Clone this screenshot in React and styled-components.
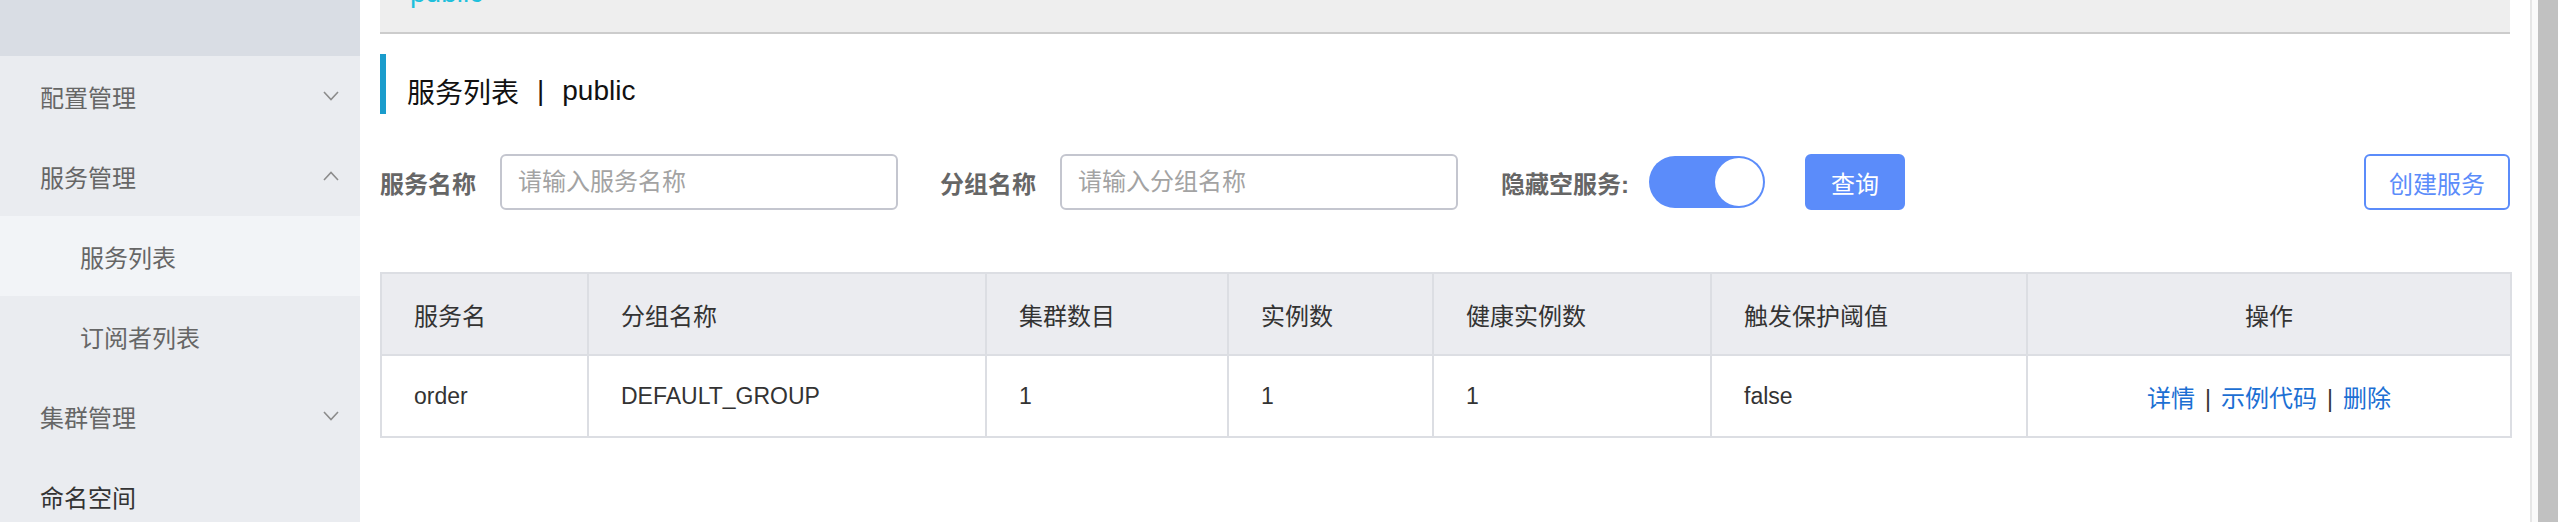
import React from "react";
import styled, { createGlobalStyle } from "styled-components";

const GlobalStyle = createGlobalStyle`
  html, body { margin: 0; padding: 0; background: #fff; }
  body { font-family: "Liberation Sans", "Noto Sans CJK SC", sans-serif; overflow: hidden; }
  * { box-sizing: border-box; }
`;

const FONT = `"Liberation Sans", "Noto Sans CJK SC", sans-serif`;

const Page = styled.div`
  display: flex;
  width: 2558px;
  height: 522px;
  overflow: hidden;
  font-family: ${FONT};
`;

const Sidebar = styled.aside`
  width: 360px;
  flex: 0 0 360px;
  background: #eaecf0;
  display: flex;
  flex-direction: column;
`;

const SideTop = styled.div`
  height: 56px;
  flex: 0 0 56px;
  background: #d9dde4;
`;

const MenuItem = styled.div`
  height: 80px;
  flex: 0 0 80px;
  display: flex;
  align-items: center;
  justify-content: space-between;
  padding: 0 20px 0 ${(p) => (p.$sub ? 80 : 40)}px;
  font-size: 24px;
  color: ${(p) => (p.$dark ? "#333" : "#666")};
  background: ${(p) => (p.$active ? "#f2f4f7" : "transparent")};
`;

const Chevron = ({ up }) => (
  <svg width="16" height="10" viewBox="0 0 16 10" style={{ marginRight: 1 }}>
    <path
      d={up ? "M1 9 L8 1.5 L15 9" : "M1 1 L8 8.5 L15 1"}
      fill="none"
      stroke="#8c8c8c"
      strokeWidth="1.6"
    />
  </svg>
);

const Main = styled.main`
  flex: 1;
  min-width: 0;
  padding: 0 20px;
  display: flex;
  flex-direction: column;
`;

const TopBar = styled.div`
  height: 34px;
  flex: 0 0 34px;
  background: #eeeeee;
  border-bottom: 2px solid #cccccc;
  overflow: hidden;
  padding-left: 30px;
`;

const Crumb = styled.div`
  margin-top: -21px;
  font-size: 28px;
  line-height: 28px;
  color: #1ec0dc;
`;

const TitleBar = styled.div`
  margin-top: 20px;
  height: 60px;
  border-left: 6px solid #1a9ccc;
  padding: 14px 0 0 21px;
  display: flex;
  align-items: center;
  font-size: 28px;
  color: #111;
`;

const Sep = styled.span`
  margin: 0 18px;
`;

const FormRow = styled.div`
  margin-top: 40px;
  height: 56px;
  display: flex;
  align-items: center;
`;

const FormItem = styled.div`
  display: flex;
  align-items: center;
  margin-right: ${(p) => p.$mr ?? 42}px;
`;

const Label = styled.label`
  font-size: 24px;
  font-weight: 700;
  color: #666;
  margin-right: ${(p) => p.$mr ?? 24}px;
  white-space: nowrap;
`;

const Input = styled.input`
  width: 398px;
  height: 56px;
  border: 2px solid #c4c6cf;
  border-radius: 6px;
  padding: 0 16px;
  font-size: 24px;
  font-family: ${FONT};
  color: #333;
  outline: none;
  &::placeholder { color: #a3a3a3; }
`;

const Switch = styled.div`
  width: 116px;
  height: 52px;
  border-radius: 26px;
  background: #5b8cfa;
  display: flex;
  align-items: center;
  justify-content: ${(p) => (p.$on ? "flex-end" : "flex-start")};
  padding: 2px;
`;

const Knob = styled.div`
  width: 48px;
  height: 48px;
  border-radius: 50%;
  background: #fff;
`;

const Button = styled.button`
  height: 56px;
  width: ${(p) => p.$w}px;
  border-radius: 6px;
  font-size: 24px;
  font-family: ${FONT};
  cursor: pointer;
  border: 2px solid #5b8cfa;
  background: ${(p) => (p.$primary ? "#5b8cfa" : "#fff")};
  color: ${(p) => (p.$primary ? "#fff" : "#5b8cfa")};
  margin-left: ${(p) => (p.$push ? "auto" : "0")};
`;

const Table = styled.table`
  margin-top: 62px;
  width: 2130px;
  border-collapse: collapse;
  table-layout: fixed;
  font-size: 24px;
  color: #333;
  border: 2px solid #dcdee3;
`;

const Th = styled.th`
  background: #ebecf0;
  font-weight: 400;
  height: 82px;
  padding: 0 32px;
  text-align: ${(p) => (p.$center ? "center" : "left")};
  border: 2px solid #dcdee3;
`;

const Td = styled.td`
  height: 82px;
  padding: 0 32px;
  font-size: 23px;
  text-align: ${(p) => (p.$center ? "center" : "left")};
  border: 2px solid #dcdee3;
`;

const Link = styled.a`
  color: #1c6fd3;
  font-size: 24px;
  text-decoration: none;
  cursor: pointer;
`;

const Pipe = styled.span`
  color: #333;
  margin: 0 10px;
`;

const Gutter = styled.div`
  width: 28px;
  flex: 0 0 28px;
  border-left: 2px solid #e6e6e6;
  background: #fafafa;
  padding-left: 6px;
  display: flex;
`;

const Thumb = styled.div`
  flex: 1;
  background: #c1c1c1;
`;

const columns = [
  { title: "服务名", w: 207 },
  { title: "分组名称", w: 398 },
  { title: "集群数目", w: 242 },
  { title: "实例数", w: 205 },
  { title: "健康实例数", w: 278 },
  { title: "触发保护阈值", w: 316 },
  { title: "操作", w: 484, center: true },
];

const rows = [
  { name: "order", group: "DEFAULT_GROUP", clusters: 1, instances: 1, healthy: 1, threshold: "false" },
];

export default function App() {
  return (
    <>
      <GlobalStyle />
      <Page>
        <Sidebar>
          <SideTop />
          <MenuItem>配置管理<Chevron /></MenuItem>
          <MenuItem>服务管理<Chevron up /></MenuItem>
          <MenuItem $sub $active>服务列表</MenuItem>
          <MenuItem $sub>订阅者列表</MenuItem>
          <MenuItem>集群管理<Chevron /></MenuItem>
          <MenuItem $dark>命名空间</MenuItem>
        </Sidebar>
        <Main>
          <TopBar>
            <Crumb>public</Crumb>
          </TopBar>
          <TitleBar>
            服务列表<Sep>|</Sep>public
          </TitleBar>
          <FormRow>
            <FormItem>
              <Label>服务名称</Label>
              <Input placeholder="请输入服务名称" />
            </FormItem>
            <FormItem $mr={43}>
              <Label>分组名称</Label>
              <Input placeholder="请输入分组名称" />
            </FormItem>
            <FormItem $mr={40}>
              <Label $mr={20}>隐藏空服务:</Label>
              <Switch $on><Knob /></Switch>
            </FormItem>
            <Button $primary $w={100}>查询</Button>
            <Button $push $w={146}>创建服务</Button>
          </FormRow>
          <Table>
            <colgroup>
              {columns.map((c) => (
                <col key={c.title} style={{ width: c.w }} />
              ))}
            </colgroup>
            <thead>
              <tr>
                {columns.map((c) => (
                  <Th key={c.title} $center={c.center}>{c.title}</Th>
                ))}
              </tr>
            </thead>
            <tbody>
              {rows.map((r) => (
                <tr key={r.name}>
                  <Td>{r.name}</Td>
                  <Td>{r.group}</Td>
                  <Td>{r.clusters}</Td>
                  <Td>{r.instances}</Td>
                  <Td>{r.healthy}</Td>
                  <Td>{r.threshold}</Td>
                  <Td $center>
                    <Link>详情</Link>
                    <Pipe>|</Pipe>
                    <Link>示例代码</Link>
                    <Pipe>|</Pipe>
                    <Link>删除</Link>
                  </Td>
                </tr>
              ))}
            </tbody>
          </Table>
        </Main>
        <Gutter><Thumb /></Gutter>
      </Page>
    </>
  );
}
